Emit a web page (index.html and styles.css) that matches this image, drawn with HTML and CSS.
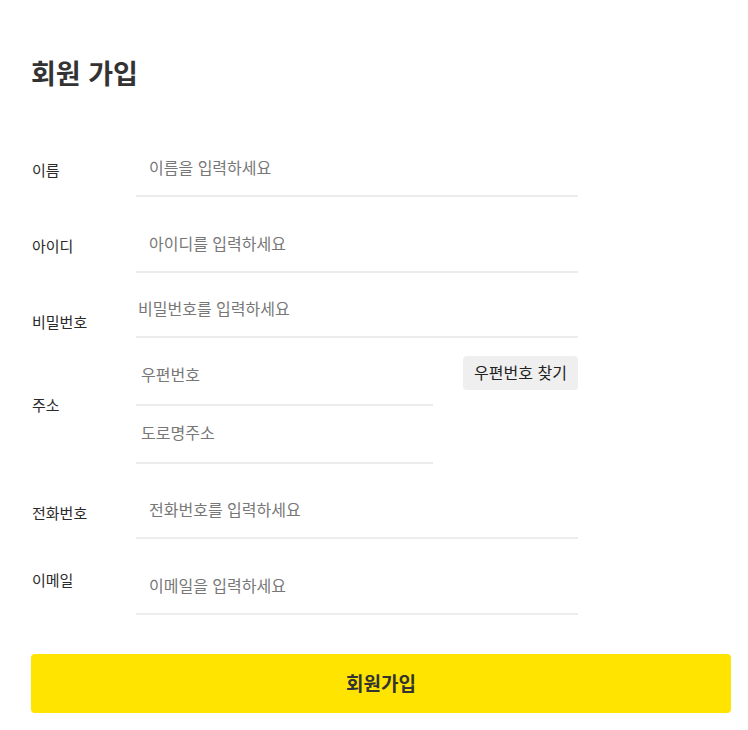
FILE: index.html
```html
<!DOCTYPE html>
<html lang="ko">
<head>
<meta charset="utf-8">
<title>회원 가입</title>
<link rel="stylesheet" href="styles.css">
</head>
<body>
<div class="page">
  <h1 class="title">회원 가입</h1>
  <form class="form" onsubmit="return false;">
    <div class="row row-name">
      <label class="label">이름</label>
      <input class="field" type="text" placeholder="이름을 입력하세요">
    </div>
    <div class="row row-id">
      <label class="label">아이디</label>
      <input class="field" type="text" placeholder="아이디를 입력하세요">
    </div>
    <div class="row row-pw">
      <label class="label label-low">비밀번호</label>
      <input class="field field-tight" type="password" placeholder="비밀번호를 입력하세요">
    </div>
    <div class="row row-addr">
      <label class="label label-addr">주소</label>
      <div class="addr">
        <div class="addr-line">
          <input class="field field-addr" type="text" placeholder="우편번호">
          <button class="zip-btn" type="button">우편번호 찾기</button>
        </div>
        <input class="field field-addr" type="text" placeholder="도로명주소">
      </div>
    </div>
    <div class="row row-tel">
      <label class="label label-tel">전화번호</label>
      <input class="field" type="text" placeholder="전화번호를 입력하세요">
    </div>
    <div class="row row-mail">
      <label class="label label-high">이메일</label>
      <input class="field" type="text" placeholder="이메일을 입력하세요">
    </div>
    <button class="submit" type="submit">회원가입</button>
  </form>
</div>
</body>
</html>
```

FILE: styles.css
```css
* {
  box-sizing: border-box;
}

body {
  margin: 0;
  background: #fff;
  font-family: "Noto Sans CJK KR", "Noto Sans", sans-serif;
  color: #333;
}

.page {
  padding: 55px 17px 0 31px;
}

.title {
  margin: 0;
  font-size: 27px;
  line-height: 36px;
  font-weight: 700;
  color: #333;
}

.form {
  display: flex;
  flex-direction: column;
  margin-top: 52px;
}

.row {
  display: flex;
  align-items: center;
}

.row-id { margin-top: 22px; }
.row-pw { margin-top: 11px; }
.row-addr { margin-top: 10px; }
.row-tel { margin-top: 21px; }
.row-mail { margin-top: 22px; }

.label {
  flex: none;
  width: 105px;
  font-size: 15px;
  line-height: 20px;
  color: #2a2a2a;
  padding-left: 1px;
  margin-top: 0;
}

.label-low {
  align-self: flex-end;
  margin: 0 0 6px;
}

.label-addr {
  margin-top: -2px;
}

.label-tel {
  margin-top: 2px;
}

.label-high {
  align-self: flex-start;
  margin-top: 9px;
}

.field {
  flex: none;
  width: 442px;
  height: 54px;
  border: none;
  border-bottom: 2px solid #ececec;
  padding: 0 0 4px 13px;
  font-family: inherit;
  font-size: 16px;
  color: #333;
  background: transparent;
  outline: none;
}

.field::placeholder {
  color: #777;
}

.field-tight {
  padding-left: 2px;
}

.addr {
  display: flex;
  flex-direction: column;
}

.addr-line {
  display: flex;
  align-items: flex-start;
}

.field-addr {
  width: 297px;
  height: 58px;
  padding-left: 5px;
}

.zip-btn {
  flex: none;
  margin: 8px 0 0 30px;
  width: 115px;
  height: 34px;
  border: none;
  border-radius: 4px;
  background: #efefef;
  font-family: inherit;
  font-size: 16px;
  color: #222;
  padding: 0 0 2px;
  cursor: pointer;
}

.submit {
  margin-top: 39px;
  width: 700px;
  height: 59px;
  border: none;
  border-radius: 4px;
  background: #ffe400;
  font-family: inherit;
  font-size: 19px;
  font-weight: 700;
  color: #333;
  padding: 0 0 2px;
  cursor: pointer;
}
```
